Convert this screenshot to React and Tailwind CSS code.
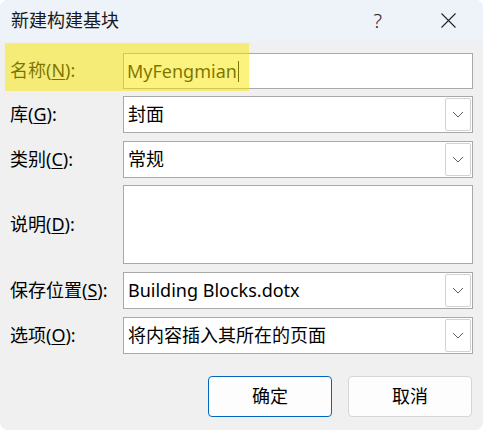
import React from "react";

const font = { fontFamily: '"Noto Sans", "Noto Sans CJK SC", sans-serif' };

function Label({ text, hotkey }) {
  return (
    <label className="text-[18px] text-black leading-none whitespace-nowrap">
      {text}(<span className="underline underline-offset-2">{hotkey}</span>):
    </label>
  );
}

function Chevron() {
  return (
    <svg width="12" height="7" viewBox="0 0 12 7" fill="none">
      <path d="M1 1l5 5 5-5" stroke="#5f5f5f" strokeWidth="1" />
    </svg>
  );
}

function Combo({ value }) {
  return (
    <div className="flex h-[37px] flex-1 items-stretch border border-[#a9a9a9] bg-white">
      <div className="flex flex-1 items-center pl-[4px] text-[18px] text-black">{value}</div>
      <div className="my-[1px] mr-[1px] flex w-[26px] items-center justify-center rounded-[2px] border border-[#d2d2d2] bg-white">
        <Chevron />
      </div>
    </div>
  );
}

function Row({ label, hotkey, children, className = "" }) {
  return (
    <div className={"flex items-center " + className}>
      <div className="w-[113px] shrink-0">
        <Label text={label} hotkey={hotkey} />
      </div>
      {children}
    </div>
  );
}

export default function App() {
  return (
    <div className="h-[430px] w-[483px] bg-white" style={font}>
      <div className="relative h-full w-full overflow-hidden rounded-[8px] bg-[#f0f0f0]">
        {/* title bar */}
        <div className="flex h-[41px] items-center bg-[#eef2f9]">
          <div className="pl-[11px] text-[18px] text-[#1a1a1a]">新建构建基块</div>
          <div className="ml-auto mr-[59px] text-[20px] font-light text-[#222]">?</div>
          <svg className="mr-[27px]" width="15" height="15" viewBox="0 0 15 15">
            <path d="M0.5 0.5l14 14M14.5 0.5l-14 14" stroke="#222" strokeWidth="1.1" />
          </svg>
        </div>

        <div className="px-[10px]">
          <Row label="名称" hotkey="N" className="mt-[12px]">
            <div className="flex h-[36px] flex-1 items-center border border-[#a9a9a9] bg-white pl-[3px] text-[18px] text-black">
              MyFengmian
              <span className="ml-[1px] inline-block h-[21px] w-px bg-black" />
            </div>
          </Row>
          <Row label="库" hotkey="G" className="mt-[7px]">
            <Combo value="封面" />
          </Row>
          <Row label="类别" hotkey="C" className="mt-[8px]">
            <Combo value="常规" />
          </Row>
          <Row label="说明" hotkey="D" className="mt-[7px]">
            <div className="h-[79px] flex-1 border border-[#a9a9a9] bg-white" />
          </Row>
          <Row label="保存位置" hotkey="S" className="mt-[8px]">
            <Combo value="Building Blocks.dotx" />
          </Row>
          <Row label="选项" hotkey="O" className="mt-[8px]">
            <Combo value="将内容插入其所在的页面" />
          </Row>

          <div className="mt-[22px] flex justify-end gap-[16px] pr-[1px]">
            <button className="h-[41px] w-[124px] rounded-[4px] border border-[#0067c0] bg-[#fdfdfd] text-[18px] text-black">
              确定
            </button>
            <button className="h-[41px] w-[124px] rounded-[4px] border border-[#d5d5d5] bg-[#fdfdfd] text-[18px] text-black">
              取消
            </button>
          </div>
        </div>

        {/* highlight annotation */}
        <div className="absolute left-[5px] top-[43px] h-[48px] w-[244px] bg-[rgba(250,232,0,0.5)]" />
      </div>
    </div>
  );
}
